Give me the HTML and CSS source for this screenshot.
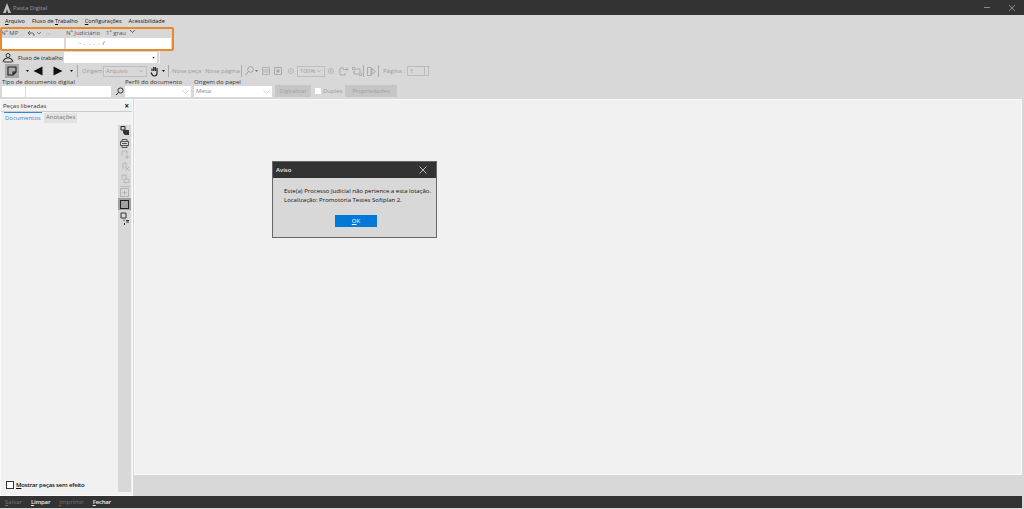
FILE: index.html
```html
<!DOCTYPE html>
<html lang="pt">
<head>
<meta charset="utf-8">
<title>Pasta Digital</title>
<link rel="stylesheet" href="styles.css">
</head>
<body>
<div class="app">
  <header class="titlebar">
    <div class="title-left">
      <svg class="logo" width="8" height="10" viewBox="0 0 8 10"><path d="M4 0 L8 10 H5.2 L4 6 L2.8 10 H0 Z" fill="#bdbdbd"/></svg>
      <span>Pasta Digital</span>
    </div>
    <div class="win-btns">
      <svg width="6" height="7" viewBox="0 0 6 7"><path d="M0 3.500H6" stroke="#8a8a8a" stroke-width="1"/></svg>
      <svg width="8" height="8" viewBox="0 0 8 8"><path d="M1 1L7 7M7 1L1 7" stroke="#8a8a8a" stroke-width="1"/></svg>
    </div>
  </header>

  <nav class="menu">
    <span><u>A</u>rquivo</span>
    <span>Fluxo de <u>T</u>rabalho</span>
    <span><u>C</u>onfigurações</span>
    <span>Acessibilidade</span>
  </nav>

  <section class="fields">
    <div class="field-mp">
      <div class="label-row">
        <span>Nº MP</span>
        <svg class="undo" width="24" height="7" viewBox="0 0 24 7"><path d="M1 3H5Q7 3 7 5V6M1 3L3 1M1 3L3 5" fill="none" stroke="#444" stroke-width=".8"/><path d="M10 2L12 4L14 2" fill="none" stroke="#555" stroke-width=".7"/><path d="M19 4h1M21 4h1M23 4h1" stroke="#aaa" stroke-width=".7"/></svg>
      </div>
      <div class="input"></div>
    </div>
    <div class="field-jud">
      <div class="label-row">
        <span>Nº Judiciário</span><span class="grau">1º grau</span>
        <svg class="chev" width="7" height="5" viewBox="0 0 7 5"><path d="M1 1L3.500 3.500L6 1" fill="none" stroke="#444" stroke-width=".8"/></svg>
      </div>
      <div class="input mask">- . . . . /</div>
    </div>
  </section>
  <div class="annot" aria-hidden="true"></div>

  <section class="flow-row">
    <svg class="flow-ico" width="12" height="10" viewBox="0 0 12 10"><circle cx="6" cy="2.500" r="2" fill="none" stroke="#333" stroke-width="1"/><path d="M1 9Q2 5 6 5T11 9M2 9H10" fill="none" stroke="#333" stroke-width="1.100"/></svg>
    <span class="flow-label">Fluxo de trabalho</span>
    <div class="flow-select"><span class="mini-arrow"></span></div>
    <i class="flow-edge"></i>
  </section>

  <section class="toolbar">
    <div class="tool-active"><svg width="10" height="10" viewBox="0 0 10 10"><path d="M1 1H9V6L6 9H1Z M9 6H6V9" fill="none" stroke="#222" stroke-width="1.100"/></svg></div>
    <span class="mini-arrow dark"></span>
    <svg class="nav" width="10" height="10" viewBox="0 0 10 10"><path d="M9.500 0.500V9.500L0.500 5Z" fill="#111"/></svg>
    <svg class="nav next" width="10" height="10" viewBox="0 0 10 10"><path d="M0.500 0.500V9.500L9.500 5Z" fill="#111"/></svg>
    <span class="mini-arrow dark after-next"></span>
    <i class="sep s-a"></i>
    <span class="off origem">Origem</span>
    <div class="combo">Arquivo<svg width="6" height="4" viewBox="0 0 6 4"><path d="M1 1L3 3L5 1" fill="none" stroke="#aaa" stroke-width=".7"/></svg></div>
    <svg class="hand" width="9" height="11" viewBox="0 0 9 11"><path d="M2 5V2.500M3.700 5V1M5.300 5V1M7 5V2V7Q7 10 4.500 10Q2.500 10 1 6.500" fill="none" stroke="#222" stroke-width="1.200"/></svg>
    <span class="mini-arrow dark hand-arrow"></span>
    <i class="sep s-b"></i>
    <span class="off nova">Nova peça</span>
    <span class="off nova2">Nova página</span>
    <i class="sep s-c"></i>
    <svg class="lens" width="9" height="10" viewBox="0 0 9 10"><circle cx="5.500" cy="3.500" r="2.800" fill="none" stroke="#999" stroke-width=".8"/><path d="M3.500 5.500L.5 9" stroke="#999"/></svg>
    <span class="mini-arrow lens-arrow"></span>
    <svg class="i-a" width="8" height="8" viewBox="0 0 8 8"><path d="M.5.5H7.500V7.500H.5ZM.5 3H7.500M.5 5H7.500" fill="none" stroke="#aaa" stroke-width=".8"/></svg>
    <svg class="i-b" width="8" height="8" viewBox="0 0 8 8"><path d="M.5.5H7.500V7.500H.5Z" fill="none" stroke="#aaa"/><rect x="2.500" y="2.500" width="3" height="3" fill="#aaa"/></svg>
    <svg class="i-c" width="6" height="6" viewBox="0 0 7 7"><circle cx="3.500" cy="3.500" r="3" fill="none" stroke="#aaa" stroke-width=".8"/><path d="M2 3.500H5" stroke="#aaa" stroke-width=".8"/></svg>
    <div class="combo zoom">100%<svg width="6" height="4" viewBox="0 0 6 4"><path d="M1 1L3 3L5 1" fill="none" stroke="#aaa" stroke-width=".7"/></svg></div>
    <svg class="i-d" width="6" height="6" viewBox="0 0 7 7"><circle cx="3.500" cy="3.500" r="3" fill="none" stroke="#aaa" stroke-width=".8"/><path d="M2 3.500H5M3.500 2V5" stroke="#aaa" stroke-width=".8"/></svg>
    <svg class="i-e" width="10" height="9" viewBox="0 0 10 9"><path d="M1 1H5M1 1V8H6V6M7 .5L9 2.500L7 4.500M4 2.500H9" fill="none" stroke="#999" stroke-width=".7"/></svg>
    <svg class="i-f" width="10" height="9" viewBox="0 0 10 9"><path d="M2 2H8V7H2ZM.5 3V.5H3M9.500 6V8.500H7" fill="none" stroke="#999" stroke-width=".7"/></svg>
    <i class="sep s-d"></i>
    <svg class="i-g" width="9" height="9" viewBox="0 0 9 9"><path d="M.5.5H4V8.500H.5ZM5 1.500L8.500 4.500L5 7.500Z" fill="none" stroke="#999" stroke-width=".7"/></svg>
    <i class="sep s-e"></i>
    <span class="off pagina">Página :</span>
    <div class="page-box">1</div>
    <div class="page-spin"></div>
  </section>

  <section class="doc-row">
    <div class="doc-col col-tipo">
      <label>Tipo de documento digital</label>
      <div class="doc-inputs">
        <div class="input code"></div>
        <div class="input desc"></div>
        <svg width="9" height="9" viewBox="0 0 9 9"><circle cx="5.500" cy="3.500" r="2.600" fill="none" stroke="#222" stroke-width=".9"/><path d="M3.600 5.400L1 8" stroke="#222" stroke-width="1"/></svg>
      </div>
    </div>
    <div class="doc-col col-perfil">
      <label>Perfil do documento</label>
      <div class="input sel"><svg width="7" height="4" viewBox="0 0 7 4"><path d="M.5.5L3.500 3.500L6.500.5" fill="none" stroke="#bbb" stroke-width=".7"/></svg></div>
    </div>
    <div class="doc-col col-origem">
      <label>Origem do papel</label>
      <div class="input sel">Mesa<svg width="7" height="4" viewBox="0 0 7 4"><path d="M.5.5L3.500 3.500L6.500.5" fill="none" stroke="#bbb" stroke-width=".7"/></svg></div>
    </div>
    <div class="doc-actions">
      <button class="btn-off btn-dig">Digitalizar</button>
      <span class="check small"></span>
      <span class="off duplex">Duplex</span>
      <button class="btn-off btn-prop">Propriedades</button>
    </div>
  </section>

  <main class="workspace">
    <aside class="side">
      <div class="side-head"><span>Peças liberadas</span><b>×</b></div>
      <div class="tabs">
        <span class="tab active">Documentos</span>
        <span class="tab">Anotações</span>
      </div>
      <div class="side-body">
        <div class="side-left">
          <div class="doc-list"></div>
          <div class="side-foot">
            <span class="check"></span>
            <span><u>M</u>ostrar peças sem efeito</span>
          </div>
        </div>
        <div class="side-tools">
          <svg width="10" height="10" viewBox="0 0 10 10"><path d="M1 .5H5V4H1Z" fill="none" stroke="#222"/><path d="M3 4H9V9H5L3 7Z" fill="#333"/></svg>
          <svg width="9" height="9" viewBox="0 0 9 9"><path d="M2 2.500V.5H7V2.500M.5 2.500H8.500V6.500H.5ZM2 4.500H7M2 6.500V8.500H7V6.500" fill="none" stroke="#333" stroke-width=".8"/></svg>
          <svg class="pull-a" width="10" height="10" viewBox="0 0 10 10"><path d="M2 7V2H7V5M5 8L9 8M7 6V10" fill="none" stroke="#b0b0b0" stroke-width=".8"/></svg>
          <svg width="10" height="9" viewBox="0 0 10 9"><path d="M3 7V1H6V5M5 5L9 8.500M9 5L5 8.500" fill="none" stroke="#b0b0b0" stroke-width=".8"/></svg>
          <svg width="10" height="9" viewBox="0 0 10 9"><path d="M2 6V1H6V5M4 5H9V8.500H4Z" fill="none" stroke="#b0b0b0" stroke-width=".8"/></svg>
          <i class="tool-sep"></i>
          <svg class="pull-a" width="9" height="9" viewBox="0 0 9 9"><path d="M.5.5H8.500V8.500H.5ZM2.500 4.500H6.500M4.500 2.500V6.500" fill="none" stroke="#aaa" stroke-width=".8"/></svg>
          <span class="tool-on"><svg width="9" height="9" viewBox="0 0 9 9"><rect x=".5" y=".5" width="8" height="8" fill="none" stroke="#222"/></svg></span>
          <svg width="10" height="11" viewBox="0 0 10 11"><path d="M1 1H6V6H1ZM4 7.500V9M6 8.500H9M6 10H9" fill="none" stroke="#222" stroke-width=".9"/></svg>
          <i class="tool-dot"></i>
        </div>
      </div>
    </aside>
    <div class="viewer">
      <div class="canvas"></div>
      <div class="canvas-foot"></div>
    </div>
  </main>

  <footer class="bottom">
    <span class="dim salvar"><u>S</u>alvar</span>
    <span><u>L</u>impar</span>
    <span class="dim"><u>I</u>mprimir</span>
    <span><u>F</u>echar</span>
  </footer>

  <div class="dialog" role="dialog">
    <div class="dialog-title">
      <span>Aviso</span>
      <svg width="8" height="8" viewBox="0 0 8 8"><path d="M.5.5L7.500 7.500M7.500.5L.5 7.500" stroke="#ddd" stroke-width=".8"/></svg>
    </div>
    <div class="dialog-body">
      <p>Este(a) Processo Judicial não pertence a esta lotação.<br>Localização: Promotoria Testes Softplan 2.</p>
      <button class="ok"><u>O</u>K</button>
    </div>
  </div>
</div>
</body>
</html>
```

FILE: styles.css
```css
* { box-sizing: border-box; }
html, body { margin: 0; height: 100%; overflow: hidden; }
body { background: #d8d8d8; font-family: "Open Sans", "Liberation Sans", sans-serif; font-size: 6px; color: #1a1a1a; }
.app { position: relative; width: 1024px; height: 509px; display: flex; flex-direction: column; }
svg { display: block; flex: none; }
span, label { white-space: nowrap; }

.titlebar { height: 15px; background: #333; display: flex; justify-content: space-between; align-items: center; padding: 0 8px 0 3px; color: #9a9a9a; }
.title-left { display: flex; align-items: center; gap: 2px; }
.win-btns { display: flex; align-items: center; gap: 18px; }

.menu { height: 12px; display: flex; align-items: center; padding-left: 5px; gap: 7px; color: #111; font-size: 5.500px; }

.fields { height: 24px; padding: 2px 0 0 1px; display: flex; gap: 2px; }
.label-row { height: 9px; display: flex; align-items: flex-start; color: #555; line-height: 8px; }
.field-mp { width: 63px; }
.field-jud { width: 105px; }
.undo { margin: 1px 0 0 9px; }
.grau { margin-left: 6px; }
.chev { margin: 0 0 0 3px; }
.input { background: #fff; height: 11px; line-height: 11px; color: #444; }
.mask { padding-left: 13px; word-spacing: 1.500px; }
.annot { position: absolute; left: 0; top: 27px; width: 174px; height: 24px; border: 2px solid #e8892c; border-radius: 2px; pointer-events: none; }

.flow-row { height: 13px; display: flex; align-items: center; padding-left: 2px; }
.flow-label { margin-left: 4px; width: 46px; color: #222; font-size: 5.500px; }
.flow-select { width: 93px; height: 11px; background: #fff; display: flex; align-items: center; justify-content: flex-end; padding-right: 2px; }
.flow-edge { width: 1px; height: 13px; background: #f0f0f0; margin-left: 2px; }
.mini-arrow { width: 3px; height: 2px; background: #777; clip-path: polygon(0 0, 100% 0, 50% 100%); flex: none; }
.mini-arrow.dark, .flow-select .mini-arrow { background: #111; }

.toolbar { height: 14px; display: flex; align-items: center; padding-left: 5px; }
.tool-active { width: 14px; height: 14px; background: #a9a9a9; display: flex; align-items: center; justify-content: center; margin-right: 7px; }
.nav { margin-left: 4px; }
.nav.next { margin-left: 10px; }
.after-next { margin-left: 7px; }
.sep { width: 1px; height: 12px; background: #aaa; flex: none; }
.s-a { margin-left: 4px; }
.origem { margin-left: 4px; width: 18px; }
.off { color: #9a9a9a; }
.combo { width: 44px; height: 11px; margin-left: 3px; border: 1px solid #bdbdbd; color: #9a9a9a; display: flex; align-items: center; justify-content: space-between; padding: 0 2px; line-height: 1; }
.hand { margin-left: 3px; }
.hand-arrow { margin-left: 3px; }
.s-b { margin-left: 3px; }
.nova { margin-left: 3px; width: 30px; }
.nova2 { margin-left: 3px; width: 33px; }
.s-c { margin-left: 3px; }
.lens { margin-left: 3px; }
.lens-arrow { margin-left: 1px; }
.i-a { margin-left: 4px; }
.i-b { margin-left: 4px; }
.i-c { margin-left: 6px; }
.combo.zoom { width: 28px; margin-left: 3px; }
.i-d { margin-left: 3px; }
.i-e { margin-left: 5px; }
.i-f { margin-left: 3px; }
.s-d { margin-left: 1px; }
.i-g { margin-left: 3px; }
.s-e { margin-left: 2px; }
.pagina { margin-left: 4px; width: 23px; }
.page-box { width: 18px; height: 10px; margin-left: 1px; border: 1px solid #bbb; color: #999; line-height: 8px; padding-left: 2px; }
.page-spin { width: 5px; height: 10px; border: 1px solid #bbb; margin-left: -1px; }

.doc-row { height: 21px; display: flex; padding-left: 2px; }
.doc-col { display: flex; flex-direction: column; }
.doc-col label { height: 8px; line-height: 8px; color: #333; }
.col-tipo { width: 123px; }
.doc-inputs { display: flex; align-items: center; gap: 1px; }
.doc-inputs svg { margin-left: 3px; }
.code { width: 23px; }
.desc { width: 85px; }
.col-perfil { width: 69px; }
.col-perfil .sel { width: 66px; }
.col-origem { width: 81px; }
.col-origem .sel { width: 78px; }
.sel { display: flex; justify-content: space-between; align-items: center; padding: 0 2px; color: #888; }
.col-perfil .sel { justify-content: flex-end; }
.doc-actions { display: flex; align-items: flex-start; padding-top: 7px; }
.btn-off { height: 12px; border: 0; background: #c6c6c6; color: #a0a0a0; font: inherit; padding: 0; }
.btn-dig { width: 36px; }
.btn-prop { width: 52px; margin-left: 3px; }
.check { width: 7px; height: 7px; background: #fff; border: 1px solid #333; flex: none; }
.check.small { border: 0; margin: 3px 0 0 4px; width: 6px; height: 6px; }
.duplex { margin: 2px 0 0 2px; width: 19px; }

.workspace { flex: 1; display: flex; margin-right: 2px; min-height: 0; }
.side { width: 133px; background: #f1f1f1; border: 1px solid #fafafa; display: flex; flex-direction: column; }
.side-head { height: 12px; display: flex; align-items: center; justify-content: space-between; padding: 0 3px 0 2px; color: #333; border-bottom: 1px solid #ccc; }
.side-head b { font-size: 8px; line-height: 1; color: #111; }
.tabs { height: 11px; display: flex; padding-left: 3px; gap: 2px; }
.tab { height: 10px; margin-top: 1px; line-height: 9px; padding: 0 2px; color: #777; background: #e2e2e2; }
.tab.active { margin-top: 0; height: 11px; color: #3a86c8; background: transparent; border-top: 1px solid #2b8adf; width: 38px; padding: 1px 0 0 1px; }
.side-body { flex: 1; display: flex; padding-right: 1px; min-height: 0; margin-top: 2px; }
.side-left { flex: 1; display: flex; flex-direction: column; }
.doc-list { flex: 1; }
.side-tools { width: 13px; background: #d8d8d8; display: flex; flex-direction: column; align-items: center; gap: 3px; padding-top: 1px; margin-bottom: 3px; }
.pull-a { margin-top: -2px; }
.tool-sep { width: 10px; height: 1px; background: #bbb; flex: none; }
.tool-on { width: 13px; height: 12px; background: #a0a0a0; display: flex; align-items: center; justify-content: center; margin: -2px 0 -1px; flex: none; }
.tool-dot { width: 1px; height: 2px; background: #222; margin-top: -3px; }
.side-foot { height: 18px; display: flex; align-items: center; gap: 2px; padding: 0 0 3px 5px; color: #111; font-weight: 600; letter-spacing: -.2px; }
.side-foot .check { width: 8px; height: 8px; }

.viewer { flex: 1; display: flex; flex-direction: column; margin-left: 1px; }
.canvas { height: 376px; background: #f1f1f1; border: 1px solid #f8f8f8; }
.canvas-foot { flex: 1; background: #d8d8d8; }

.bottom { height: 12px; margin: 0 2px 1px 0; background: #333; color: #eee; display: flex; align-items: center; padding-left: 5px; gap: 9px; flex: none; font-weight: 600; letter-spacing: -.2px; }
.bottom .dim { color: #777; font-weight: 400; letter-spacing: 0; }
.bottom .salvar { width: 17px; }

.dialog { position: absolute; left: 272px; top: 161px; width: 165px; height: 77px; background: #d8d8d8; border: 1px solid #666; }
.dialog-title { height: 16px; background: #333; color: #eee; display: flex; align-items: center; justify-content: space-between; padding: 0 9px 0 3px; font-weight: 600; }
.dialog-body { padding: 9px 0 0 11px; color: #111; }
.dialog-body p { margin: 0; line-height: 8.500px; white-space: nowrap; }
.ok { display: block; margin: 11px 0 0 51px; width: 42px; height: 12px; border: 0; background: #0078d7; color: #fff; font: inherit; padding: 0; }
```
